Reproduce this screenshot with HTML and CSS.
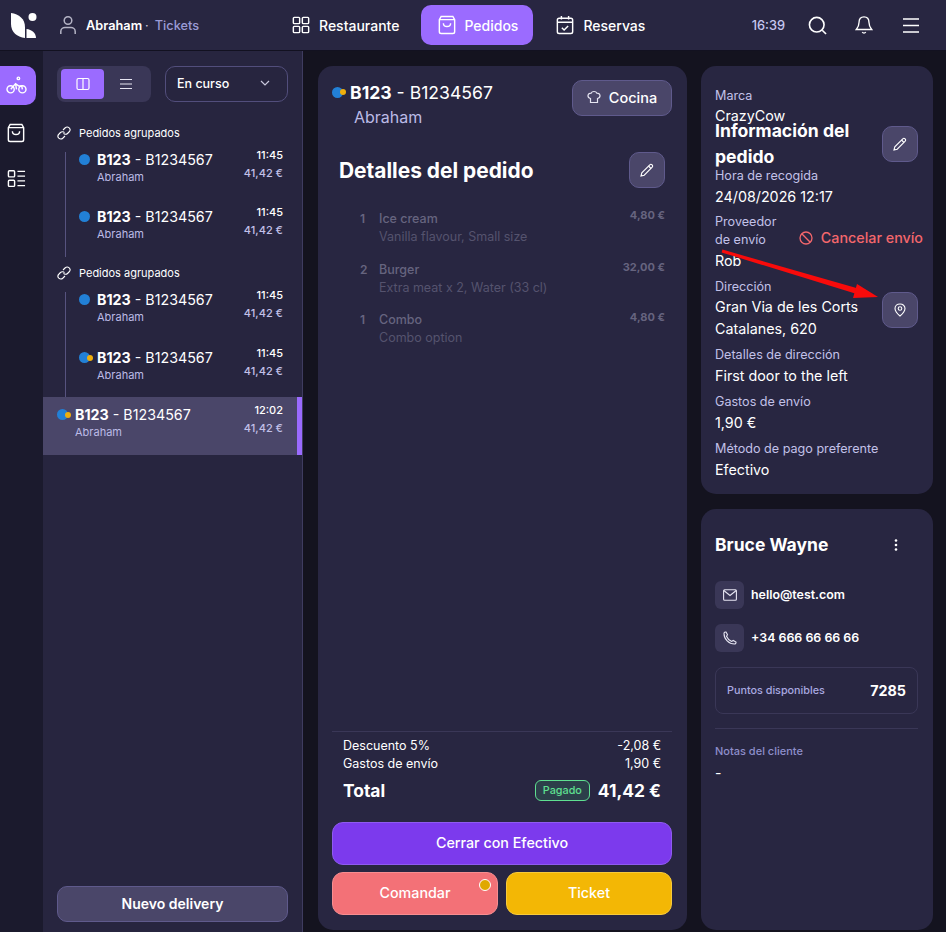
FILE: index.html
```html
<!DOCTYPE html>
<html lang="es">
<head>
  <meta charset="UTF-8" />
  <title>Pedidos</title>
  <link rel="stylesheet" href="styles.css">
</head>
<body>

  <!-- Top bar -->
  <header class="topbar">
    <div class="top-left">
      <svg class="logo" width="26" height="26" viewBox="0 0 26 26" fill="#fff">
        <path d="M0 1C8 2 14 7 14 15V26C6 25 0 20 0 12Z" />
        <circle cx="21.500" cy="5" r="4" />
        <path d="M15.500 26V17C20.500 17.500 25 21 25 26Z" />
      </svg>
      <svg class="icon user-icon" width="20" height="20" viewBox="0 0 20 20" fill="none" stroke="#b4b3c4" stroke-width="1.500">
        <circle cx="10" cy="5.500" r="3.800" />
        <path d="M2.800 19V16.500C2.800 14 5 12.500 7 12.500H13C15 12.500 17.200 14 17.200 16.500V19" />
      </svg>
      <span class="user-name">Abraham</span><span class="user-sep">·</span>
      <span class="user-link">Tickets</span>
    </div>
    <nav class="top-nav">
      <a class="nav-item">
        <svg width="18" height="18" viewBox="0 0 20 20" fill="none" stroke="#fff" stroke-width="1.600">
          <rect x="1.500" y="1.500" width="7" height="7" rx="1" /><rect x="11.500" y="1.500" width="7" height="7" rx="1" />
          <rect x="1.500" y="11.500" width="7" height="7" rx="1" /><rect x="11.500" y="11.500" width="7" height="7" rx="1" />
        </svg>
        Restaurante
      </a>
      <a class="nav-item active">
        <svg width="18" height="20" viewBox="0 0 20 22" fill="none" stroke="#fff" stroke-width="1.600">
          <path d="M3.500 1.500H16.500L18.500 5V18.500C18.500 19.600 17.600 20.500 16.500 20.500H3.500C2.400 20.500 1.500 19.600 1.500 18.500V5Z" />
          <path d="M1.500 5H18.500M6 9C6 14 14 14 14 9" />
        </svg>
        Pedidos
      </a>
      <a class="nav-item">
        <svg width="18" height="20" viewBox="0 0 20 22" fill="none" stroke="#fff" stroke-width="1.600">
          <rect x="1.500" y="3.500" width="17" height="17" rx="2" />
          <path d="M1.500 8H18.500M6 1V5M14 1V5M6.500 14L9 16.500L13.500 12" />
        </svg>
        Reservas
      </a>
    </nav>
    <div class="top-right">
      <span class="clock">16:39</span>
      <svg width="19" height="19" viewBox="0 0 20 20" fill="none" stroke="#fff" stroke-width="1.700">
        <circle cx="9.200" cy="9.200" r="7.700" /><path d="M15 15L19 19" />
      </svg>
      <svg width="18" height="20" viewBox="0 0 20 20" fill="none" stroke="#fff" stroke-width="1.500">
        <path d="M10 1C6.500 1 4.500 3.500 4.500 7C4.500 11 3.500 12.500 1.500 15H18.500C16.500 12.500 15.500 11 15.500 7C15.500 3.500 13.500 1 10 1Z" />
        <path d="M8 18C9 19.300 11 19.300 12 18" />
      </svg>
      <svg class="menu-icon" width="16" height="15" viewBox="0 0 16 15" fill="none" stroke="#fff" stroke-width="1.600">
        <path d="M0 1H16M0 7.500H16M0 14H16" />
      </svg>
    </div>
  </header>

  <div class="layout">

    <!-- Left rail -->
    <aside class="rail">
      <a class="rail-btn active">
        <svg width="21" height="19" viewBox="0 0 22 20" fill="none" stroke="#fff" stroke-width="1.500">
          <circle cx="4.800" cy="14" r="3.800" /><circle cx="17.200" cy="14" r="3.800" />
          <circle cx="13" cy="2.500" r="1.300" />
          <path d="M5 14L10 8L13.500 10.500H16.500L17.200 14M10 8L11 14" />
        </svg>
      </a>
      <a class="rail-btn">
        <svg width="18" height="20" viewBox="0 0 20 22" fill="none" stroke="#fff" stroke-width="1.600">
          <path d="M3.500 1.500H16.500L18.500 5V18.500C18.500 19.600 17.600 20.500 16.500 20.500H3.500C2.400 20.500 1.500 19.600 1.500 18.500V5Z" />
          <path d="M1.500 5H18.500M6 9C6 14 14 14 14 9" />
        </svg>
      </a>
      <a class="rail-btn">
        <svg width="19" height="19" viewBox="0 0 20 20" fill="none" stroke="#fff" stroke-width="1.500">
          <rect x="1.500" y="1.800" width="6.500" height="6.500" rx="1" /><rect x="1.500" y="11.800" width="6.500" height="6.500" rx="1" />
          <path d="M11 2.500H19M11 7.500H19M11 12.500H19M11 17.500H19" />
        </svg>
      </a>
    </aside>

    <!-- Order list -->
    <aside class="list-panel">
      <div class="list-tools">
        <div class="toggle">
          <span class="toggle-btn active">
            <svg width="14" height="14" viewBox="0 0 14 14" fill="none" stroke="#fff" stroke-width="1.200">
              <rect x="1" y="1.500" width="12" height="11" rx="1.500" /><path d="M7 1.500V12.500" />
            </svg>
          </span>
          <span class="toggle-btn">
            <svg width="12" height="12" viewBox="0 0 12 12" fill="none" stroke="#e6e5f2" stroke-width="1.200">
              <path d="M0 1.500H12M0 6H12M0 10.500H12" />
            </svg>
          </span>
        </div>
        <div class="select">
          En curso
          <svg width="10" height="6" viewBox="0 0 10 6" fill="none" stroke="#c9c8dc" stroke-width="1.200">
            <path d="M1 1L5 5L9 1" />
          </svg>
        </div>
      </div>

      <div class="group first">
        <div class="group-title">
          <svg width="14" height="14" viewBox="0 0 14 14" fill="none" stroke="#fff" stroke-width="1.100">
            <path d="M6 4L8 2C9.300 .8 11 .8 12.200 1.800C13.300 3 13.300 4.800 12 6L10.500 7.500C9.300 8.700 7.500 8.500 6.500 7.300" />
            <path d="M8 10L6 12C4.700 13.200 3 13.200 1.800 12.200C.7 11 .7 9.200 2 8L3.500 6.500C4.700 5.300 6.500 5.500 7.500 6.700" />
          </svg>
          Pedidos agrupados
        </div>
        <div class="group-rows">
          <div class="order">
            <span class="status"><i class="dot"></i></span>
            <div class="order-main"><div class="order-id"><b>B123</b> - B1234567</div><div class="order-sub">Abraham</div></div>
            <div class="order-side"><div class="order-time">11:45</div><div class="order-price">41,42 €</div></div>
          </div>
          <div class="order">
            <span class="status"><i class="dot"></i></span>
            <div class="order-main"><div class="order-id"><b>B123</b> - B1234567</div><div class="order-sub">Abraham</div></div>
            <div class="order-side"><div class="order-time">11:45</div><div class="order-price">41,42 €</div></div>
          </div>
        </div>
      </div>

      <div class="group second">
        <div class="group-title">
          <svg width="14" height="14" viewBox="0 0 14 14" fill="none" stroke="#fff" stroke-width="1.100">
            <path d="M6 4L8 2C9.300 .8 11 .8 12.200 1.800C13.300 3 13.300 4.800 12 6L10.500 7.500C9.300 8.700 7.500 8.500 6.500 7.300" />
            <path d="M8 10L6 12C4.700 13.200 3 13.200 1.800 12.200C.7 11 .7 9.200 2 8L3.500 6.500C4.700 5.300 6.500 5.500 7.500 6.700" />
          </svg>
          Pedidos agrupados
        </div>
        <div class="group-rows">
          <div class="order">
            <span class="status"><i class="dot"></i></span>
            <div class="order-main"><div class="order-id"><b>B123</b> - B1234567</div><div class="order-sub">Abraham</div></div>
            <div class="order-side"><div class="order-time">11:45</div><div class="order-price">41,42 €</div></div>
          </div>
          <div class="order">
            <span class="status"><i class="dot"></i><i class="dot-small"></i></span>
            <div class="order-main"><div class="order-id"><b>B123</b> - B1234567</div><div class="order-sub">Abraham</div></div>
            <div class="order-side"><div class="order-time">11:45</div><div class="order-price">41,42 €</div></div>
          </div>
        </div>
      </div>

      <div class="order selected">
        <span class="status"><i class="dot"></i><i class="dot-small"></i></span>
        <div class="order-main"><div class="order-id"><b>B123</b> - B1234567</div><div class="order-sub">Abraham</div></div>
        <div class="order-side"><div class="order-time">12:02</div><div class="order-price">41,42 €</div></div>
      </div>

      <button class="btn new-delivery">Nuevo delivery</button>
    </aside>

    <main class="content">

      <!-- Order detail -->
      <section class="card detail">
        <div class="detail-head">
          <div>
            <div class="detail-id">
              <span class="status"><i class="dot"></i><i class="dot-small"></i></span>
              <span><b>B123</b> - B1234567</span>
            </div>
            <div class="detail-name">Abraham</div>
          </div>
          <button class="btn kitchen">
            <svg width="14" height="14" viewBox="0 0 14 14" fill="none" stroke="#e6e5f2" stroke-width="1.200">
              <path d="M3.500 8.500C1.800 8 .8 6.800 1 5.300C1.300 3.800 2.800 3 4 3.300C4.700 2 5.800 1.500 7 1.500C8.200 1.500 9.300 2 10 3.300C11.200 3 12.700 3.800 13 5.300C13.200 6.800 12.200 8 10.500 8.500V12.500H3.500Z" />
            </svg>
            Cocina
          </button>
        </div>

        <div class="detail-title">
          <h2>Detalles del pedido</h2>
          <button class="btn square">
            <svg width="14" height="14" viewBox="0 0 14 14" fill="none" stroke="#fff" stroke-width="1.100">
              <path d="M1 13L1.800 9.800L9.800 1.800C10.400 1.200 11.400 1.200 12 1.800L12.200 2C12.800 2.600 12.800 3.600 12.200 4.200L4.200 12.200Z" /><path d="M8.500 3L11 5.500" />
            </svg>
          </button>
        </div>

        <ul class="items">
          <li>
            <span class="item-qty">1</span>
            <div class="item-main"><div class="item-name">Ice cream</div><div class="item-opts">Vanilla flavour, Small size</div></div>
            <span class="item-price">4,80 €</span>
          </li>
          <li>
            <span class="item-qty">2</span>
            <div class="item-main"><div class="item-name">Burger</div><div class="item-opts">Extra meat x 2, Water (33 cl)</div></div>
            <span class="item-price">32,00 €</span>
          </li>
          <li>
            <span class="item-qty">1</span>
            <div class="item-main"><div class="item-name">Combo</div><div class="item-opts">Combo option</div></div>
            <span class="item-price">4,80 €</span>
          </li>
        </ul>

        <div class="totals">
          <div class="total-row"><span>Descuento 5%</span><span>-2,08 €</span></div>
          <div class="total-row"><span>Gastos de envío</span><span>1,90 €</span></div>
          <div class="total-final">
            <span>Total</span>
            <span class="paid">Pagado</span>
            <span class="total-amount">41,42 €</span>
          </div>
        </div>

        <div class="actions">
          <button class="action primary">Cerrar con Efectivo</button>
          <div class="action-row">
            <button class="action coral">Comandar<i class="action-dot"></i></button>
            <button class="action amber">Ticket</button>
          </div>
        </div>
      </section>

      <div class="side">

        <!-- Order information -->
        <section class="card info">
          <div class="info-brand">
            <div class="label">Marca</div>
            <div class="value">CrazyCow</div>
          </div>
          <div class="info-title">
            <h3>Información del pedido</h3>
            <button class="btn square">
              <svg width="14" height="14" viewBox="0 0 14 14" fill="none" stroke="#fff" stroke-width="1.100">
                <path d="M1 13L1.800 9.800L9.800 1.800C10.400 1.200 11.400 1.200 12 1.800L12.200 2C12.800 2.600 12.800 3.600 12.200 4.200L4.200 12.200Z" /><path d="M8.500 3L11 5.500" />
              </svg>
            </button>
          </div>
          <div class="field pickup">
            <div class="label">Hora de recogida</div>
            <div class="value">24/08/2026 12:17</div>
          </div>
          <div class="field provider">
            <div class="provider-top">
              <div class="label narrow">Proveedor de envío</div>
              <div class="cancel">
                <svg width="14" height="14" viewBox="0 0 14 14" fill="none" stroke="#f4676c" stroke-width="1.300">
                  <circle cx="7" cy="7" r="6" /><path d="M2.800 2.800L11.200 11.200" />
                </svg>
                Cancelar envío
              </div>
            </div>
            <div class="value">Rob</div>
          </div>
          <div class="field address">
            <div>
              <div class="label">Dirección</div>
              <div class="value tall">Gran Via de les Corts Catalanes, 620</div>
            </div>
            <button class="btn square">
              <svg width="12" height="14" viewBox="0 0 12 14" fill="none" stroke="#fff" stroke-width="1.100">
                <path d="M6 13C3 10.500 1 8 1 5.500C1 2.800 3.200 1 6 1C8.800 1 11 2.800 11 5.500C11 8 9 10.500 6 13Z" /><circle cx="6" cy="5.500" r="1.800" />
              </svg>
            </button>
          </div>
          <div class="field">
            <div class="label">Detalles de dirección</div>
            <div class="value">First door to the left</div>
          </div>
          <div class="field">
            <div class="label">Gastos de envío</div>
            <div class="value">1,90 €</div>
          </div>
          <div class="field">
            <div class="label">Método de pago preferente</div>
            <div class="value">Efectivo</div>
          </div>
          <svg class="arrow" width="160" height="60" viewBox="0 0 160 60">
            <path d="M.4 -1.400L138.800 38.300L137.200 43.700L-.4 1.400Z" fill="#f80b0b" />
            <path d="M156 46L135 33L131 47Z" fill="#f80b0b" />
          </svg>
        </section>

        <!-- Customer -->
        <section class="card customer">
          <div class="customer-head">
            <h3>Bruce Wayne</h3>
            <svg width="4" height="12" viewBox="0 0 4 12" fill="#fff">
              <circle cx="2" cy="1.500" r="1.300" /><circle cx="2" cy="6" r="1.300" /><circle cx="2" cy="10.500" r="1.300" />
            </svg>
          </div>
          <div class="contact">
            <span class="contact-icon">
              <svg width="14" height="12" viewBox="0 0 14 12" fill="none" stroke="#e6e5f2" stroke-width="1.100">
                <rect x=".6" y=".8" width="12.800" height="10.400" rx="1" /><path d="M.8 1.500L7 6.500L13.200 1.500" />
              </svg>
            </span>
            <span class="contact-text">hello@test.com</span>
          </div>
          <div class="contact">
            <span class="contact-icon">
              <svg width="14" height="14" viewBox="0 0 14 14" fill="none" stroke="#e6e5f2" stroke-width="1.100">
                <path d="M1 2.500C1 1.500 2 .8 3 1L4.500 3.800L3.500 5.300C4.500 7.800 6.200 9.500 8.700 10.500L10.200 9.500L13 11C13.200 12 12.500 13 11.500 13C5.800 13 1 8.200 1 2.500Z" />
              </svg>
            </span>
            <span class="contact-text">+34 666 66 66 66</span>
          </div>
          <div class="points">
            <span>Puntos disponibles</span>
            <b>7285</b>
          </div>
          <div class="notes">
            <div class="notes-label">Notas del cliente</div>
            <div class="notes-value">-</div>
          </div>
        </section>

      </div>
    </main>
  </div>

</body>
</html>
```

FILE: styles.css
```css
* {
  box-sizing: border-box;
}
html, body {
  margin: 0;
  height: 100%;
  overflow: hidden;
}
body {
  font-family: Inter, "Noto Sans", sans-serif;
  font-size: 14px;
  color: #fff;
  background: #14131f;
}
h2, h3 {
  margin: 0;
}
button {
  font-family: inherit;
  color: #fff;
  cursor: pointer;
}

/* Top bar */
.topbar {
  height: 51px;
  display: flex;
  align-items: center;
  background: #282641;
  border-bottom: 1px solid #121120;
}
.top-left {
  width: 292px;
  display: flex;
  align-items: center;
  padding-left: 11px;
  font-size: 12.750px;
}
.logo {
  margin-right: 21px;
}
.user-icon {
  margin-right: 8px;
}
.user-name {
  font-weight: 600;
}
.user-sep {
  margin: 0 6px 0 3px;
  color: #c9c8dc;
}
.user-link {
  font-weight: 500;
  color: #9a9bd6;
}
.top-nav {
  display: flex;
  align-items: center;
  gap: 14px;
}
.nav-item {
  height: 40px;
  display: flex;
  align-items: center;
  gap: 9px;
  padding: 0 15px 0 17px;
  font-size: 14px;
  font-weight: 500;
  border-radius: 10px;
}
.nav-item.active {
  gap: 8px;
  background: #9b6bff;
}
.nav-item:first-child {
  padding: 0 8px 0 0;
}
.nav-item:last-child {
  padding: 0;
  margin-left: 9px;
}
.top-right {
  display: flex;
  align-items: center;
  margin-left: auto;
  padding-right: 27px;
  gap: 28px;
}
.clock {
  font-size: 12.800px;
  font-weight: 500;
  color: #c5c6f0;
  margin-right: -5px;
}
.menu-icon {
  margin-left: 2px;
}

/* Layout */
.layout {
  display: flex;
  height: calc(100% - 51px);
}
.rail {
  width: 43px;
  flex-shrink: 0;
  padding-top: 15px;
  background: #1b1a2d;
}
.rail-btn {
  width: 36px;
  height: 39px;
  display: flex;
  align-items: center;
  justify-content: center;
  margin-bottom: 7px;
  padding-right: 4px;
  border-radius: 0 10px 10px 0;
}
.rail-btn.active {
  margin-bottom: 8px;
  background: #9b6bff;
}

/* Order list */
.list-panel {
  width: 260px;
  flex-shrink: 0;
  display: flex;
  flex-direction: column;
  padding-top: 15px;
  background: #27253f;
  border-right: 1px solid #3f3c60;
}
.list-tools {
  display: flex;
  gap: 14px;
  padding: 0 14px;
  margin-bottom: 21px;
}
.toggle {
  width: 94px;
  height: 36px;
  display: flex;
  padding: 3px 4px;
  background: #3a3757;
  border-radius: 8px;
}
.toggle-btn {
  width: 43px;
  display: flex;
  align-items: center;
  justify-content: center;
  border-radius: 4px;
}
.toggle-btn.active {
  background: #9b6bff;
}
.select {
  width: 123px;
  height: 36px;
  display: flex;
  align-items: center;
  justify-content: space-between;
  padding: 0 17px 2px 11px;
  font-size: 12.500px;
  font-weight: 500;
  border: 1px solid #524e7c;
  border-radius: 10px;
}
.group.first {
  height: 140px;
}
.group.second {
  height: 134px;
}
.group-title {
  height: 20px;
  display: flex;
  align-items: center;
  gap: 8px;
  padding-left: 14px;
  font-size: 11px;
}
.group-rows {
  position: relative;
}
.group-rows::before {
  content: "";
  position: absolute;
  left: 22px;
  top: 9px;
  height: 105px;
  width: 1px;
  background: #57537f;
}
.order {
  height: 57px;
  display: flex;
  padding: 7px 19px 0 36px;
}
.second .order:last-child {
  margin-top: 1px;
}
.status {
  position: relative;
  width: 18px;
  height: 28px;
  flex-shrink: 0;
}
.dot {
  position: absolute;
  left: 0;
  top: 4px;
  width: 11px;
  height: 11px;
  border-radius: 50%;
  background: #2280d6;
}
.dot-small {
  position: absolute;
  left: 8px;
  top: 7px;
  width: 6px;
  height: 6px;
  border-radius: 50%;
  background: #eeae0c;
}
.order-main {
  flex: 1;
}
.order-id {
  font-size: 14.250px;
  line-height: 20px;
  white-space: nowrap;
}
.order-id b {
  font-weight: 700;
}
.order-sub {
  font-size: 11px;
  line-height: 14px;
  color: #bcbbe6;
}
.order-side {
  text-align: right;
}
.order-time {
  font-size: 11px;
  font-weight: 500;
  line-height: 14px;
  margin-top: -2px;
}
.order-price {
  font-size: 11px;
  font-weight: 500;
  line-height: 14px;
  margin-top: 4px;
  color: #c2c1e8;
}
.order.selected {
  height: 58px;
  padding: 8px 14px 0;
  background: #4a4669;
  border-right: 5px solid #9b6bff;
}
.btn {
  background: #4a4669;
  border: 1px solid #5f5a8c;
  border-radius: 10px;
}
.new-delivery {
  width: 231px;
  height: 36px;
  margin: auto 0 10px 14px;
  padding: 0 0 2px;
  font-size: 14px;
  font-weight: 600;
}

/* Main area */
.content {
  flex: 1;
  display: flex;
  gap: 14px;
  padding: 15px 13px 2px 15px;
  min-width: 0;
}
.card {
  background: #282641;
  border-radius: 15px;
}
.detail {
  width: 369px;
  flex-shrink: 0;
  display: flex;
  flex-direction: column;
  padding: 14px 15px 15px 14px;
}
.detail-head {
  display: flex;
  justify-content: space-between;
}
.detail-id {
  display: flex;
  font-size: 17.600px;
  line-height: 24px;
  padding-top: 1px;
}
.detail-id .status {
  height: 24px;
}
.detail-id .dot {
  top: 6px;
}
.detail-id .dot-small {
  top: 8px;
}
.detail-name {
  margin: 2px 0 0 22px;
  font-size: 16px;
  line-height: 20px;
  color: #bcbbe6;
}
.kitchen {
  width: 100px;
  height: 36px;
  display: flex;
  align-items: center;
  justify-content: center;
  gap: 8px;
  padding: 0 0 2px;
  font-size: 14.500px;
  font-weight: 500;
}
.detail-title {
  display: flex;
  align-items: center;
  justify-content: space-between;
  padding: 0 7px;
  margin-top: 25px;
}
.detail-title h2 {
  font-size: 20.900px;
  font-weight: 700;
}
.square {
  width: 36px;
  height: 36px;
  flex-shrink: 0;
  display: flex;
  align-items: center;
  justify-content: center;
  padding: 0;
}
.items {
  list-style: none;
  margin: 22px 0 0;
  padding: 0 7px 0 28px;
  flex: 1;
}
.items li {
  display: flex;
  height: 50.500px;
}
.items li:first-child .item-price {
  margin-top: -1px;
}
.item-qty {
  width: 19px;
  font-size: 12px;
  font-weight: 600;
  line-height: 18px;
  color: #66647f;
}
.item-main {
  flex: 1;
}
.item-name {
  font-size: 12.500px;
  line-height: 18px;
  font-weight: 500;
  color: #66647f;
}
.item-opts {
  font-size: 12.500px;
  line-height: 18px;
  color: #55536e;
}
.item-price {
  font-size: 11px;
  font-weight: 700;
  line-height: 12px;
  color: #66647f;
}
.totals {
  padding: 5px 11px 0;
  border-top: 1px solid #3a3757;
}
.total-row {
  display: flex;
  justify-content: space-between;
  font-size: 12.500px;
  line-height: 18px;
}
.total-final {
  display: flex;
  align-items: center;
  margin-top: 7px;
  font-size: 17.400px;
  font-weight: 700;
}
.total-final > span:first-child {
  margin-right: auto;
}
.paid {
  height: 21px;
  padding: 0 7px;
  margin-right: 8px;
  font-size: 10.800px;
  font-weight: 500;
  line-height: 19px;
  color: #5fe091;
  background: #2c3f4a;
  border: 1px solid #5fe091;
  border-radius: 6px;
}
.actions {
  display: flex;
  flex-direction: column;
  gap: 7px;
  margin-top: 21px;
}
.action {
  position: relative;
  height: 43px;
  flex: 1;
  padding: 0 0 2px;
  font-size: 14.300px;
  font-weight: 500;
  border: none;
  border-radius: 11px;
}
.action-row {
  display: flex;
  gap: 8px;
}
.primary {
  flex: none;
  background: #7c3aed;
  border: 1px solid #8f5bf0;
}
.coral {
  background: #f37177;
  border: 1px solid #f78d90;
}
.amber {
  background: #f3b705;
  border: 1px solid #f7c93c;
}
.action-dot {
  position: absolute;
  top: 6px;
  right: 6px;
  width: 12px;
  height: 12px;
  border-radius: 50%;
  background: #e0a800;
  border: 1px solid #fff;
}

/* Right column */
.side {
  flex: 1;
  display: flex;
  flex-direction: column;
  gap: 15px;
  min-width: 0;
}
.info {
  position: relative;
  height: 428px;
  padding: 20px 15px 0 14px;
}
.info-brand {
  height: 32px;
}
.label {
  font-size: 12.600px;
  line-height: 20px;
  color: #c2c1e8;
}
.value {
  font-size: 14.300px;
  line-height: 20px;
}
.info-title {
  display: flex;
  align-items: center;
  justify-content: space-between;
  height: 52px;
}
.info-title h3 {
  font-size: 17.600px;
  font-weight: 700;
  line-height: 26px;
  width: 150px;
}
.field {
  margin-bottom: 6px;
}
.field.pickup {
  margin-top: -4px;
}
.field .value {
  line-height: 21px;
}
.provider-top {
  display: flex;
  align-items: flex-end;
  justify-content: space-between;
  margin-bottom: 1px;
}
.label.narrow {
  width: 70px;
  line-height: 18px;
}
.cancel {
  display: flex;
  align-items: center;
  gap: 8px;
  margin: 0 -5px 2px 0;
  font-size: 14.300px;
  font-weight: 500;
  line-height: 18px;
  white-space: nowrap;
  color: #f4676c;
}
.address {
  display: flex;
  align-items: center;
  justify-content: space-between;
  margin-bottom: 5px;
}
.address .square {
  margin-top: 2px;
}
.field .value.tall {
  line-height: 22px;
  width: 150px;
  margin-top: -1px;
}
.arrow {
  position: absolute;
  left: 21px;
  top: 185px;
  overflow: visible;
}
.customer {
  flex: 1;
  padding: 0 15px 0 14px;
}
.customer-head {
  display: flex;
  align-items: center;
  justify-content: space-between;
  padding: 26px 20px 26px 0;
}
.customer-head h3 {
  font-size: 17.500px;
  font-weight: 700;
  line-height: 20px;
}
.contact {
  display: flex;
  align-items: center;
  gap: 7px;
  height: 28px;
  margin-bottom: 15px;
  font-size: 12.400px;
  font-weight: 600;
}
.contact-text {
  margin-top: -2px;
}
.contact-icon {
  width: 29px;
  height: 28px;
  display: flex;
  align-items: center;
  justify-content: center;
  background: #3a3757;
  border-radius: 6px;
}
.points {
  height: 47px;
  display: flex;
  align-items: center;
  justify-content: space-between;
  padding: 0 11px;
  font-size: 10.800px;
  font-weight: 500;
  color: #a9a9e0;
  border: 1px solid #3a3757;
  border-radius: 8px;
}
.points b {
  font-size: 14.300px;
  font-weight: 700;
  color: #fff;
}
.notes {
  margin-top: 14px;
  padding-top: 14px;
  border-top: 1px solid #3a3757;
}
.notes-label {
  font-size: 11px;
  line-height: 16px;
  font-weight: 500;
  color: #8e8ecb;
}
.notes-value {
  margin-top: 6px;
  font-size: 14px;
  line-height: 16px;
}
```
